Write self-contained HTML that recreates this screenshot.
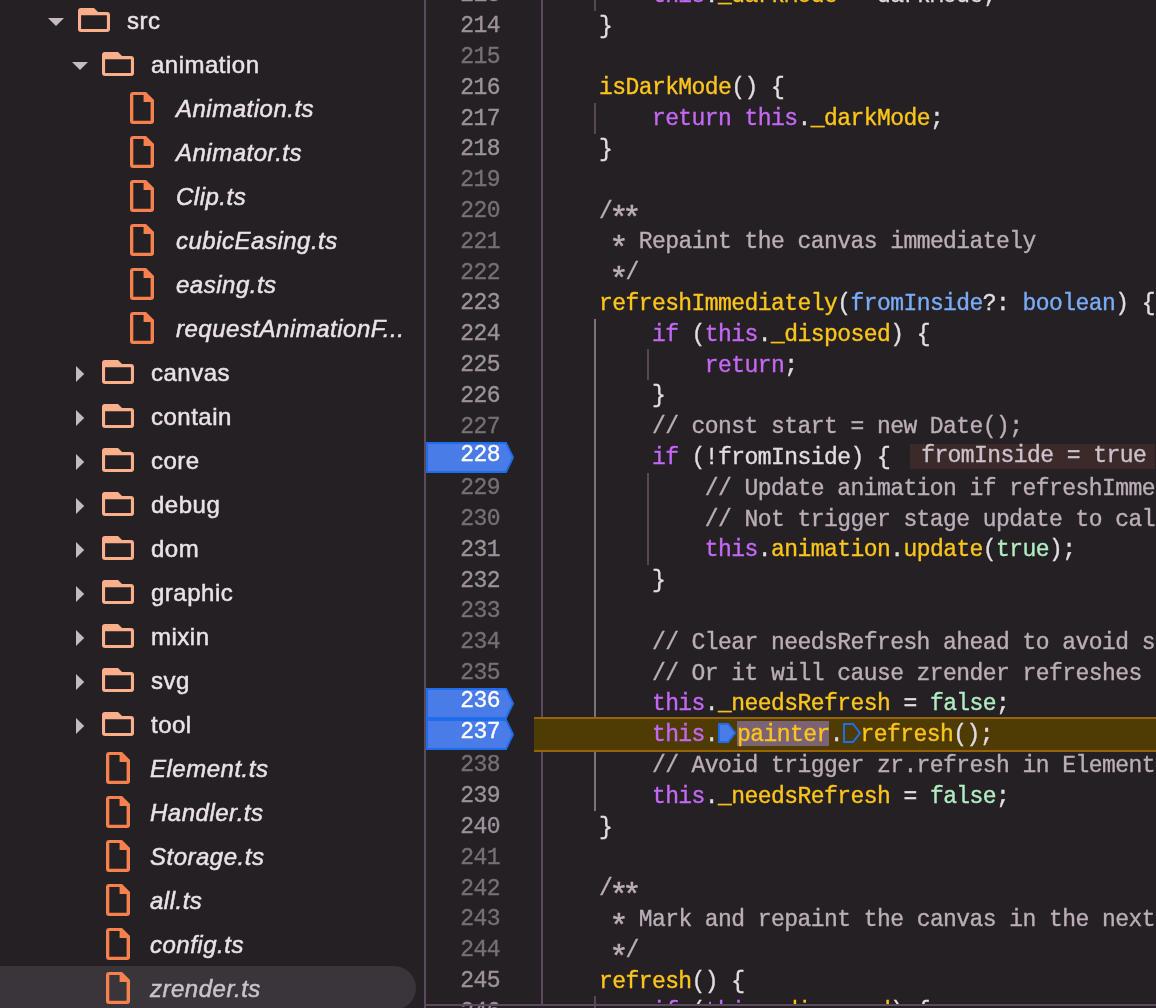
<!DOCTYPE html>
<html><head><meta charset="utf-8"><style>
html,body{margin:0;padding:0;}
body{width:1156px;height:1008px;overflow:hidden;background:#242024;position:relative;}
.ic{position:absolute;display:block;}
.lbl{position:absolute;height:44px;line-height:44px;font-family:"Liberation Sans",sans-serif;font-size:24px;color:#ebe1e8;white-space:pre;letter-spacing:0.5px;will-change:transform;-webkit-text-stroke-width:0.5px;}
.it{font-style:italic;}
.sl{color:#cbc2ca;}
.sel{position:absolute;left:-30px;width:446px;height:44px;border-radius:22px;background:#3a353b;}
.divider{position:absolute;left:424px;top:0;width:2px;height:1008px;background:#5b4a5d;}
.hline{position:absolute;left:424px;top:1004px;width:732px;height:2px;background:#5b4a5d;}
.gborder{position:absolute;left:541px;top:0;width:2px;height:1004px;background:#5b4a5d;}
.num{position:absolute;left:426.7px;width:73px;text-align:right;height:30.8px;line-height:30.8px;font-family:"Liberation Mono",monospace;font-size:23px;letter-spacing:-0.555px;color:#757075;will-change:transform;-webkit-text-stroke-width:0.35px;}
.num.hi{color:#9d929b;}
.num.bpn{color:#ffffff;}
.bpm{position:absolute;left:426px;height:31px;}
.bpm svg{display:block;}
.code{position:absolute;left:546.4px;top:0;width:609px;height:1004px;overflow:hidden;will-change:transform;}
.ln{position:absolute;left:0;height:30.8px;line-height:30.8px;white-space:pre;font-family:"Liberation Mono",monospace;font-size:23px;letter-spacing:-0.566px;color:#e3dce3;-webkit-text-stroke-width:0.35px;}
.exec{position:absolute;left:534px;width:622px;height:31px;background:#4f3c04;border-top:2px solid #9a6400;border-bottom:2px solid #9a6400;}
.k{color:#c468f5;}
.y{color:#fcc51c;}
.b{color:#7aacf9;}
.g{color:#b2ecc4;}
.c{color:#bcaeb8;}
.p{color:#e3dce3;}
.hl{}
.ast{display:inline-block;transform:translateY(7.7px) scale(1.4);}
.hlbox{position:absolute;left:737px;top:721px;width:92px;height:25px;background:#7b6274;}
.inl{display:inline-block;margin-left:19.8px;padding-left:11.2px;padding-right:40px;background:#3c2a2b;color:#cbc2cb;line-height:25px;height:25px;vertical-align:top;margin-top:1.2px;}
.ibp{display:inline-block;width:19px;height:20px;vertical-align:top;margin-top:3px;}
.ibp svg{display:block;overflow:visible;}
.guide{position:absolute;width:2px;background:#564955;}
.guide.g1a{background:#7d7279;}
</style></head><body>
<svg class="ic" style="left:48px;top:18px" width="16" height="8"><path d="M0,0H16L8,8Z" fill="#c5bac3"/></svg>
<svg class="ic" style="left:78px;top:8px" width="32" height="24" viewBox="0 0 32 24"><path d="M0,3A3,3 0 0 1 3,0H16L20,4H29A3,3 0 0 1 32,7V21A3,3 0 0 1 29,24H3A3,3 0 0 1 0,21ZM3.1,7.3V20.9H28.9V7.3Z" fill="#fbae8a" fill-rule="evenodd"/></svg>
<div class="lbl" style="left:127px;top:-1px">src</div>
<svg class="ic" style="left:72px;top:62px" width="16" height="8"><path d="M0,0H16L8,8Z" fill="#c5bac3"/></svg>
<svg class="ic" style="left:102px;top:52px" width="32" height="24" viewBox="0 0 32 24"><path d="M0,3A3,3 0 0 1 3,0H16L20,4H29A3,3 0 0 1 32,7V21A3,3 0 0 1 29,24H3A3,3 0 0 1 0,21ZM3.1,7.3V20.9H28.9V7.3Z" fill="#fbae8a" fill-rule="evenodd"/></svg>
<div class="lbl" style="left:150.5px;top:43px">animation</div>
<svg class="ic" style="left:130px;top:92px" width="24" height="32" viewBox="0 0 24 32"><path d="M0,3A3,3 0 0 1 3,0H16L24,8V29A3,3 0 0 1 21,32H3A3,3 0 0 1 0,29ZM3.3,3.1V28.8H20.6V10.1H13.6V3.1Z" fill="#f7814e" fill-rule="evenodd"/></svg>
<div class="lbl it" style="left:175.5px;top:87px">Animation.ts</div>
<svg class="ic" style="left:130px;top:136px" width="24" height="32" viewBox="0 0 24 32"><path d="M0,3A3,3 0 0 1 3,0H16L24,8V29A3,3 0 0 1 21,32H3A3,3 0 0 1 0,29ZM3.3,3.1V28.8H20.6V10.1H13.6V3.1Z" fill="#f7814e" fill-rule="evenodd"/></svg>
<div class="lbl it" style="left:175.5px;top:131px">Animator.ts</div>
<svg class="ic" style="left:130px;top:180px" width="24" height="32" viewBox="0 0 24 32"><path d="M0,3A3,3 0 0 1 3,0H16L24,8V29A3,3 0 0 1 21,32H3A3,3 0 0 1 0,29ZM3.3,3.1V28.8H20.6V10.1H13.6V3.1Z" fill="#f7814e" fill-rule="evenodd"/></svg>
<div class="lbl it" style="left:175.5px;top:175px">Clip.ts</div>
<svg class="ic" style="left:130px;top:224px" width="24" height="32" viewBox="0 0 24 32"><path d="M0,3A3,3 0 0 1 3,0H16L24,8V29A3,3 0 0 1 21,32H3A3,3 0 0 1 0,29ZM3.3,3.1V28.8H20.6V10.1H13.6V3.1Z" fill="#f7814e" fill-rule="evenodd"/></svg>
<div class="lbl it" style="left:175.5px;top:219px">cubicEasing.ts</div>
<svg class="ic" style="left:130px;top:268px" width="24" height="32" viewBox="0 0 24 32"><path d="M0,3A3,3 0 0 1 3,0H16L24,8V29A3,3 0 0 1 21,32H3A3,3 0 0 1 0,29ZM3.3,3.1V28.8H20.6V10.1H13.6V3.1Z" fill="#f7814e" fill-rule="evenodd"/></svg>
<div class="lbl it" style="left:175.5px;top:263px">easing.ts</div>
<svg class="ic" style="left:130px;top:312px" width="24" height="32" viewBox="0 0 24 32"><path d="M0,3A3,3 0 0 1 3,0H16L24,8V29A3,3 0 0 1 21,32H3A3,3 0 0 1 0,29ZM3.3,3.1V28.8H20.6V10.1H13.6V3.1Z" fill="#f7814e" fill-rule="evenodd"/></svg>
<div class="lbl it" style="left:175.5px;top:307px">requestAnimationF...</div>
<svg class="ic" style="left:76px;top:366px" width="9" height="16"><path d="M0,0L8.2,8L0,16Z" fill="#c5bac3"/></svg>
<svg class="ic" style="left:102px;top:360px" width="32" height="24" viewBox="0 0 32 24"><path d="M0,3A3,3 0 0 1 3,0H16L20,4H29A3,3 0 0 1 32,7V21A3,3 0 0 1 29,24H3A3,3 0 0 1 0,21ZM3.1,7.3V20.9H28.9V7.3Z" fill="#fbae8a" fill-rule="evenodd"/></svg>
<div class="lbl" style="left:150.5px;top:351px">canvas</div>
<svg class="ic" style="left:76px;top:410px" width="9" height="16"><path d="M0,0L8.2,8L0,16Z" fill="#c5bac3"/></svg>
<svg class="ic" style="left:102px;top:404px" width="32" height="24" viewBox="0 0 32 24"><path d="M0,3A3,3 0 0 1 3,0H16L20,4H29A3,3 0 0 1 32,7V21A3,3 0 0 1 29,24H3A3,3 0 0 1 0,21ZM3.1,7.3V20.9H28.9V7.3Z" fill="#fbae8a" fill-rule="evenodd"/></svg>
<div class="lbl" style="left:150.5px;top:395px">contain</div>
<svg class="ic" style="left:76px;top:454px" width="9" height="16"><path d="M0,0L8.2,8L0,16Z" fill="#c5bac3"/></svg>
<svg class="ic" style="left:102px;top:448px" width="32" height="24" viewBox="0 0 32 24"><path d="M0,3A3,3 0 0 1 3,0H16L20,4H29A3,3 0 0 1 32,7V21A3,3 0 0 1 29,24H3A3,3 0 0 1 0,21ZM3.1,7.3V20.9H28.9V7.3Z" fill="#fbae8a" fill-rule="evenodd"/></svg>
<div class="lbl" style="left:150.5px;top:439px">core</div>
<svg class="ic" style="left:76px;top:498px" width="9" height="16"><path d="M0,0L8.2,8L0,16Z" fill="#c5bac3"/></svg>
<svg class="ic" style="left:102px;top:492px" width="32" height="24" viewBox="0 0 32 24"><path d="M0,3A3,3 0 0 1 3,0H16L20,4H29A3,3 0 0 1 32,7V21A3,3 0 0 1 29,24H3A3,3 0 0 1 0,21ZM3.1,7.3V20.9H28.9V7.3Z" fill="#fbae8a" fill-rule="evenodd"/></svg>
<div class="lbl" style="left:150.5px;top:483px">debug</div>
<svg class="ic" style="left:76px;top:542px" width="9" height="16"><path d="M0,0L8.2,8L0,16Z" fill="#c5bac3"/></svg>
<svg class="ic" style="left:102px;top:536px" width="32" height="24" viewBox="0 0 32 24"><path d="M0,3A3,3 0 0 1 3,0H16L20,4H29A3,3 0 0 1 32,7V21A3,3 0 0 1 29,24H3A3,3 0 0 1 0,21ZM3.1,7.3V20.9H28.9V7.3Z" fill="#fbae8a" fill-rule="evenodd"/></svg>
<div class="lbl" style="left:150.5px;top:527px">dom</div>
<svg class="ic" style="left:76px;top:586px" width="9" height="16"><path d="M0,0L8.2,8L0,16Z" fill="#c5bac3"/></svg>
<svg class="ic" style="left:102px;top:580px" width="32" height="24" viewBox="0 0 32 24"><path d="M0,3A3,3 0 0 1 3,0H16L20,4H29A3,3 0 0 1 32,7V21A3,3 0 0 1 29,24H3A3,3 0 0 1 0,21ZM3.1,7.3V20.9H28.9V7.3Z" fill="#fbae8a" fill-rule="evenodd"/></svg>
<div class="lbl" style="left:150.5px;top:571px">graphic</div>
<svg class="ic" style="left:76px;top:630px" width="9" height="16"><path d="M0,0L8.2,8L0,16Z" fill="#c5bac3"/></svg>
<svg class="ic" style="left:102px;top:624px" width="32" height="24" viewBox="0 0 32 24"><path d="M0,3A3,3 0 0 1 3,0H16L20,4H29A3,3 0 0 1 32,7V21A3,3 0 0 1 29,24H3A3,3 0 0 1 0,21ZM3.1,7.3V20.9H28.9V7.3Z" fill="#fbae8a" fill-rule="evenodd"/></svg>
<div class="lbl" style="left:150.5px;top:615px">mixin</div>
<svg class="ic" style="left:76px;top:674px" width="9" height="16"><path d="M0,0L8.2,8L0,16Z" fill="#c5bac3"/></svg>
<svg class="ic" style="left:102px;top:668px" width="32" height="24" viewBox="0 0 32 24"><path d="M0,3A3,3 0 0 1 3,0H16L20,4H29A3,3 0 0 1 32,7V21A3,3 0 0 1 29,24H3A3,3 0 0 1 0,21ZM3.1,7.3V20.9H28.9V7.3Z" fill="#fbae8a" fill-rule="evenodd"/></svg>
<div class="lbl" style="left:150.5px;top:659px">svg</div>
<svg class="ic" style="left:76px;top:718px" width="9" height="16"><path d="M0,0L8.2,8L0,16Z" fill="#c5bac3"/></svg>
<svg class="ic" style="left:102px;top:712px" width="32" height="24" viewBox="0 0 32 24"><path d="M0,3A3,3 0 0 1 3,0H16L20,4H29A3,3 0 0 1 32,7V21A3,3 0 0 1 29,24H3A3,3 0 0 1 0,21ZM3.1,7.3V20.9H28.9V7.3Z" fill="#fbae8a" fill-rule="evenodd"/></svg>
<div class="lbl" style="left:150.5px;top:703px">tool</div>
<svg class="ic" style="left:106px;top:752px" width="24" height="32" viewBox="0 0 24 32"><path d="M0,3A3,3 0 0 1 3,0H16L24,8V29A3,3 0 0 1 21,32H3A3,3 0 0 1 0,29ZM3.3,3.1V28.8H20.6V10.1H13.6V3.1Z" fill="#f7814e" fill-rule="evenodd"/></svg>
<div class="lbl it" style="left:150.3px;top:747px">Element.ts</div>
<svg class="ic" style="left:106px;top:796px" width="24" height="32" viewBox="0 0 24 32"><path d="M0,3A3,3 0 0 1 3,0H16L24,8V29A3,3 0 0 1 21,32H3A3,3 0 0 1 0,29ZM3.3,3.1V28.8H20.6V10.1H13.6V3.1Z" fill="#f7814e" fill-rule="evenodd"/></svg>
<div class="lbl it" style="left:150.3px;top:791px">Handler.ts</div>
<svg class="ic" style="left:106px;top:840px" width="24" height="32" viewBox="0 0 24 32"><path d="M0,3A3,3 0 0 1 3,0H16L24,8V29A3,3 0 0 1 21,32H3A3,3 0 0 1 0,29ZM3.3,3.1V28.8H20.6V10.1H13.6V3.1Z" fill="#f7814e" fill-rule="evenodd"/></svg>
<div class="lbl it" style="left:150.3px;top:835px">Storage.ts</div>
<svg class="ic" style="left:106px;top:884px" width="24" height="32" viewBox="0 0 24 32"><path d="M0,3A3,3 0 0 1 3,0H16L24,8V29A3,3 0 0 1 21,32H3A3,3 0 0 1 0,29ZM3.3,3.1V28.8H20.6V10.1H13.6V3.1Z" fill="#f7814e" fill-rule="evenodd"/></svg>
<div class="lbl it" style="left:150.3px;top:879px">all.ts</div>
<svg class="ic" style="left:106px;top:928px" width="24" height="32" viewBox="0 0 24 32"><path d="M0,3A3,3 0 0 1 3,0H16L24,8V29A3,3 0 0 1 21,32H3A3,3 0 0 1 0,29ZM3.3,3.1V28.8H20.6V10.1H13.6V3.1Z" fill="#f7814e" fill-rule="evenodd"/></svg>
<div class="lbl it" style="left:150.3px;top:923px">config.ts</div>
<div class="sel" style="top:966px"></div>
<svg class="ic" style="left:106px;top:972px" width="24" height="32" viewBox="0 0 24 32"><path d="M0,3A3,3 0 0 1 3,0H16L24,8V29A3,3 0 0 1 21,32H3A3,3 0 0 1 0,29ZM3.3,3.1V28.8H20.6V10.1H13.6V3.1Z" fill="#f7814e" fill-rule="evenodd"/></svg>
<div class="lbl it sl" style="left:150.3px;top:967px">zrender.ts</div>
<div class="divider"></div>
<div class="guide g1" style="left:594px;top:-20.20px;height:30.80px"></div><div class="guide g1" style="left:594px;top:103.00px;height:30.80px"></div><div class="guide g1a" style="left:594px;top:318.60px;height:492.80px"></div><div class="guide g2" style="left:647px;top:349.40px;height:30.80px"></div><div class="guide g2" style="left:647px;top:472.60px;height:92.40px"></div><div class="guide g1" style="left:594px;top:996.20px;height:30.80px"></div>
<div class="exec" style="top:717px"></div>
<div class="hlbox"></div>
<div class="gborder" style="height:717px"></div>
<div class="gborder" style="top:752px;height:252px"></div>
<div class="num hi" style="top:-19.55px">213</div><div class="num hi" style="top:11.25px">214</div><div class="num" style="top:42.05px">215</div><div class="num hi" style="top:72.85px">216</div><div class="num hi" style="top:103.65px">217</div><div class="num hi" style="top:134.45px">218</div><div class="num" style="top:165.25px">219</div><div class="num" style="top:196.05px">220</div><div class="num" style="top:226.85px">221</div><div class="num" style="top:257.65px">222</div><div class="num hi" style="top:288.45px">223</div><div class="num hi" style="top:319.25px">224</div><div class="num hi" style="top:350.05px">225</div><div class="num hi" style="top:380.85px">226</div><div class="num" style="top:411.65px">227</div><div class="bpm" style="top:441.80px"><svg width="89" height="31" viewBox="0 0 89 31"><path d="M1,1H80L87,15.5L80,30H1Z" fill="#4a7ce8" stroke="#1f6deb" stroke-width="2"/></svg></div><div class="num bpn" style="top:439.90px">228</div><div class="num" style="top:473.25px">229</div><div class="num" style="top:504.05px">230</div><div class="num hi" style="top:534.85px">231</div><div class="num hi" style="top:565.65px">232</div><div class="num" style="top:596.45px">233</div><div class="num" style="top:627.25px">234</div><div class="num" style="top:658.05px">235</div><div class="bpm" style="top:688.20px"><svg width="89" height="31" viewBox="0 0 89 31"><path d="M1,1H80L87,15.5L80,30H1Z" fill="#4a7ce8" stroke="#1f6deb" stroke-width="2"/></svg></div><div class="num bpn" style="top:686.30px">236</div><div class="bpm" style="top:719.00px"><svg width="89" height="31" viewBox="0 0 89 31"><path d="M1,1H80L87,15.5L80,30H1Z" fill="#4a7ce8" stroke="#1f6deb" stroke-width="2"/></svg></div><div class="num bpn" style="top:717.10px">237</div><div class="num" style="top:750.45px">238</div><div class="num hi" style="top:781.25px">239</div><div class="num hi" style="top:812.05px">240</div><div class="num" style="top:842.85px">241</div><div class="num" style="top:873.65px">242</div><div class="num" style="top:904.45px">243</div><div class="num" style="top:935.25px">244</div><div class="num hi" style="top:966.05px">245</div><div class="num hi" style="top:996.85px">246</div>
<div class="code">
<div class="ln" style="top:-19.00px">        <span class="k">this</span><span class="p">.</span><span class="y">_darkMode</span><span class="p"> = darkMode;</span></div><div class="ln" style="top:11.80px">    <span class="p">}</span></div><div class="ln" style="top:42.60px"></div><div class="ln" style="top:73.40px">    <span class="y">isDarkMode</span><span class="p">() {</span></div><div class="ln" style="top:104.20px">        <span class="k">return</span><span class="p"> </span><span class="k">this</span><span class="p">.</span><span class="y">_darkMode</span><span class="p">;</span></div><div class="ln" style="top:135.00px">    <span class="p">}</span></div><div class="ln" style="top:165.80px"></div><div class="ln" style="top:196.60px">    <span class="c">/<span class="ast">*</span><span class="ast">*</span></span></div><div class="ln" style="top:227.40px">    <span class="c"> <span class="ast">*</span> Repaint the canvas immediately</span></div><div class="ln" style="top:258.20px">    <span class="c"> <span class="ast">*</span>/</span></div><div class="ln" style="top:289.00px">    <span class="y">refreshImmediately</span><span class="p">(</span><span class="b">fromInside</span><span class="p">?: </span><span class="b">boolean</span><span class="p">) {</span></div><div class="ln" style="top:319.80px">        <span class="k">if</span><span class="p"> (</span><span class="k">this</span><span class="p">.</span><span class="y">_disposed</span><span class="p">) {</span></div><div class="ln" style="top:350.60px">            <span class="k">return</span><span class="p">;</span></div><div class="ln" style="top:381.40px">        <span class="p">}</span></div><div class="ln" style="top:412.20px">        <span class="c">// const start = new Date();</span></div><div class="ln" style="top:443.00px">        <span class="k">if</span><span class="p"> (!fromInside) {</span><span class="inl">fromInside = true</span></div><div class="ln" style="top:473.80px">            <span class="c">// Update animation if refreshImmediately invoked from outside.</span></div><div class="ln" style="top:504.60px">            <span class="c">// Not trigger stage update to call flush.</span></div><div class="ln" style="top:535.40px">            <span class="k">this</span><span class="p">.</span><span class="y">animation</span><span class="p">.</span><span class="y">update</span><span class="p">(</span><span class="g">true</span><span class="p">);</span></div><div class="ln" style="top:566.20px">        <span class="p">}</span></div><div class="ln" style="top:597.00px"></div><div class="ln" style="top:627.80px">        <span class="c">// Clear needsRefresh ahead to avoid something wrong happens in refresh</span></div><div class="ln" style="top:658.60px">        <span class="c">// Or it will cause zrender refreshes again and again.</span></div><div class="ln" style="top:689.40px">        <span class="k">this</span><span class="p">.</span><span class="y">_needsRefresh</span><span class="p"> = </span><span class="g">false</span><span class="p">;</span></div><div class="ln" style="top:720.20px">        <span class="k">this</span><span class="p">.</span><span class="ibp"><svg width="19" height="20" viewBox="0 0 19 20"><path d="M1,1H10L17,10L10,19H1Z" fill="#4a7ce8" stroke="#1f6deb" stroke-width="2"/></svg></span><span class="y hl">painter</span><span class="p">.</span><span class="ibp" style="width:17.6px"><svg width="19" height="20" viewBox="0 0 19 20"><path d="M1,1H10L17,10L10,19H1Z" fill="none" stroke="#1f6deb" stroke-width="2"/></svg></span><span class="y">refresh</span><span class="p">();</span></div><div class="ln" style="top:751.00px">        <span class="c">// Avoid trigger zr.refresh in Element#beforeUpdate hook</span></div><div class="ln" style="top:781.80px">        <span class="k">this</span><span class="p">.</span><span class="y">_needsRefresh</span><span class="p"> = </span><span class="g">false</span><span class="p">;</span></div><div class="ln" style="top:812.60px">    <span class="p">}</span></div><div class="ln" style="top:843.40px"></div><div class="ln" style="top:874.20px">    <span class="c">/<span class="ast">*</span><span class="ast">*</span></span></div><div class="ln" style="top:905.00px">    <span class="c"> <span class="ast">*</span> Mark and repaint the canvas in the next frame of browser</span></div><div class="ln" style="top:935.80px">    <span class="c"> <span class="ast">*</span>/</span></div><div class="ln" style="top:966.60px">    <span class="y">refresh</span><span class="p">() {</span></div><div class="ln" style="top:997.40px">        <span class="k">if</span><span class="p"> (</span><span class="k">this</span><span class="p">.</span><span class="y">_disposed</span><span class="p">) {</span></div>
</div>
<div class="hline"></div>
</body></html>
